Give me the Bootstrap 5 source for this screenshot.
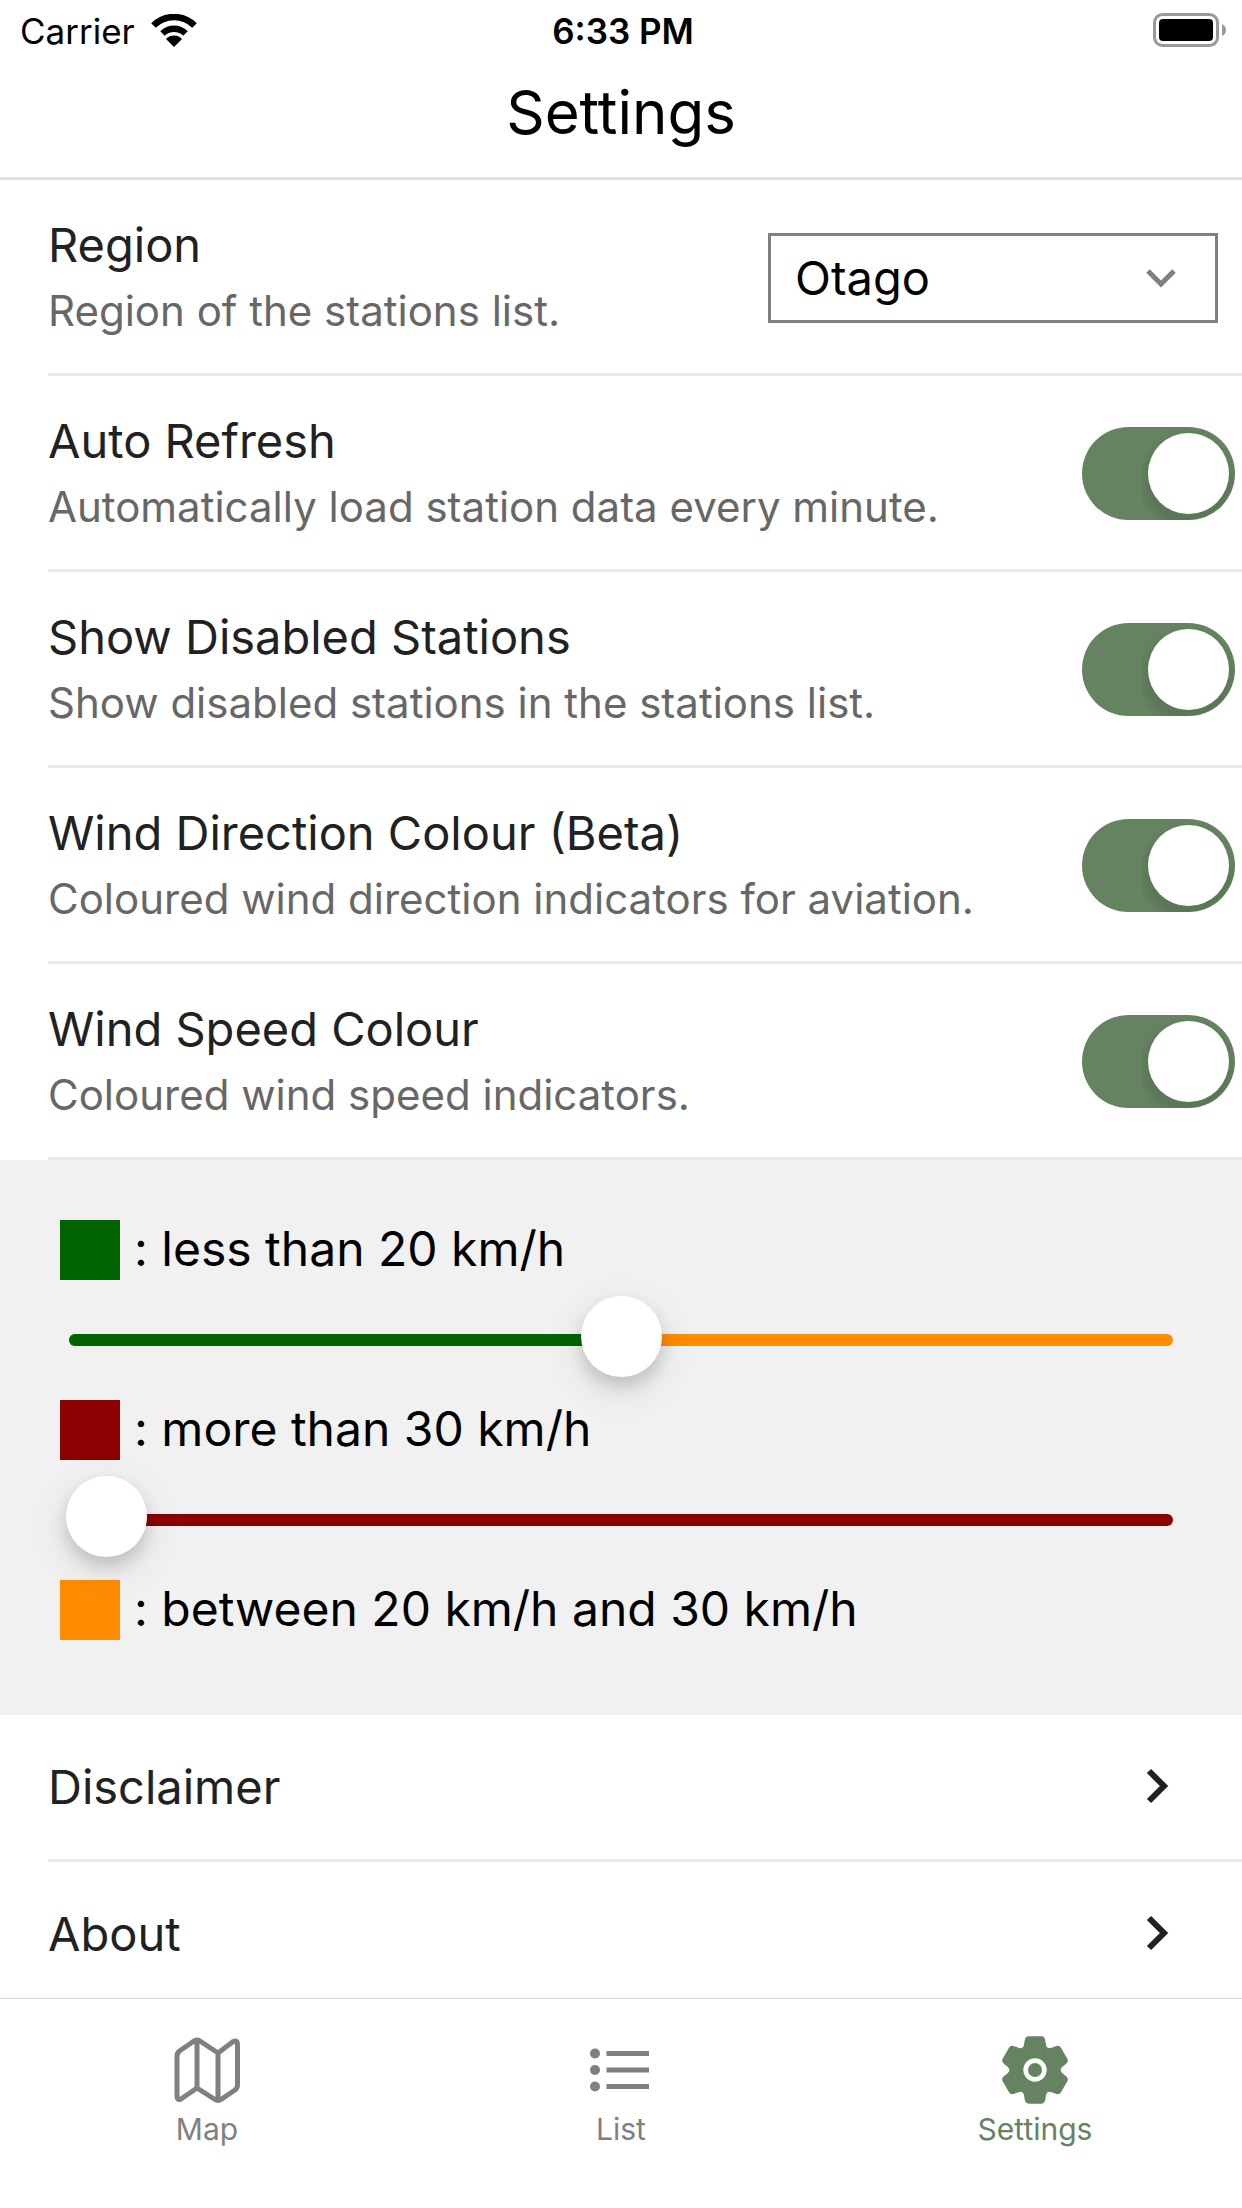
<!DOCTYPE html>
<html lang="en">
<head>
<meta charset="utf-8">
<meta name="viewport" content="width=device-width, initial-scale=1">
<title>Settings</title>
<link href="https://cdn.jsdelivr.net/npm/bootstrap@5.3.0/dist/css/bootstrap.min.css" rel="stylesheet">
<style>
  :root { --accent: #658361; --ink: #212121; --line: #eaeaea; --muted-icon: #808080; }
  body { font-family: Inter, "Liberation Sans", sans-serif; color: #000; background: #fff; }

  .status-bar { height: 60px; padding: 0 16px 0 20px; font-size: 35px; line-height: 57px; }
  .status-bar span { padding-top: 3px; }
  .app-header { border-bottom: 3px solid #e0e0e0; padding-bottom: 13px; }
  .app-header h1 { font-size: 60px; line-height: 104px; font-weight: 400; }

  .page-body { padding-bottom: 190px; }
  .setting { padding-left: 48px; }
  .setting-inner { border-bottom: 3px solid var(--line); padding: 34px 7px 32px 0; }
  .setting-title { font-size: 47px; line-height: 62px; color: var(--ink); }
  .setting-desc { font-size: 42px; line-height: 60px; margin-top: 5px; color: #676767; }

  .region-select {
    width: 450px; height: 90px; margin-right: 17px; padding: 0 84px 0 24px;
    border: 3px solid #808080; border-radius: 0; color: #000; font-size: 47px; line-height: 60px;
    background-image: url("data:image/svg+xml,%3csvg xmlns='http://www.w3.org/2000/svg' viewBox='0 0 32 20' fill='none' stroke='%23808080' stroke-width='5'%3e%3cpath d='M3 3l13 13L29 3'/%3e%3c/svg%3e");
    background-size: 32px 20px; background-position: right 38px center;
  }
  .form-switch .form-check-input.toggle {
    float: none; width: 153px; height: 93px; margin: 0; border: 0; border-radius: 47px;
    background-color: #ccc;
    background-image: url("data:image/svg+xml,%3csvg xmlns='http://www.w3.org/2000/svg' viewBox='0 0 93 93'%3e%3cdefs%3e%3cradialGradient id='g'%3e%3cstop offset='.75' stop-color='%23000' stop-opacity='.09'/%3e%3cstop offset='1' stop-color='%23000' stop-opacity='0'/%3e%3c/radialGradient%3e%3c/defs%3e%3ccircle cx='45' cy='54' r='52' fill='url(%23g)'/%3e%3ccircle cx='46.5' cy='46.5' r='40.5' fill='%23fff'/%3e%3c/svg%3e");
  }
  .form-switch .form-check-input.toggle:checked { background-color: var(--accent); }

  .speed-panel { background: #f1f1f1; padding: 60px 60px 75px; }
  .legend-line { height: 60px; font-size: 48px; line-height: 58px; gap: 14px; }
  .swatch { width: 60px; height: 60px; }
  .green { background-color: #006400; }
  .orange { background-color: #ff8c00; }
  .red { background-color: #8b0000; }
  .slider { display: grid; align-items: center; height: 120px; margin: 0 6px; }
  .slider > * { grid-area: 1 / 1; }
  .slider .progress { height: 12px; margin: 0 3px; border-radius: 6px; }
  .slider .form-range { z-index: 1; height: 81px; margin-bottom: 7px; }
  .form-range::-webkit-slider-runnable-track { height: 81px; background: transparent; }
  .form-range::-webkit-slider-thumb, .form-range::-webkit-slider-thumb:active {
    width: 81px; height: 81px; margin: 0; background: #fff; border-radius: 50%;
    box-shadow: 0 9px 15px rgba(0,0,0,.13), 0 12px 39px rgba(0,0,0,.12);
  }

  .link-row { height: 147px; padding-right: 71px; border-bottom: 3px solid var(--line); font-size: 47px; line-height: 60px; color: var(--ink); }
  .link-row svg { width: 28px; height: 40px; }

  .tab-bar { height: 210px; background: #fff; border-top: 1px solid #d8d8d8; padding-top: 35px; }
  .tab-link { gap: 4px; color: var(--muted-icon); font-size: 30px; line-height: 38px; }
  .tab-link.active { color: var(--accent); }
  .tab-link svg { width: 72px; height: 72px; }
</style>
<script src="https://cdn.jsdelivr.net/npm/bootstrap@5.3.0/dist/js/bootstrap.bundle.min.js"></script>
</head>
<body>
<div class="status-bar row g-0 align-items-center">
  <div class="col d-flex align-items-center">
    <span>Carrier</span>
    <svg class="ms-2 ps-1" width="58" height="33" viewBox="-4 0 54 33" aria-hidden="true">
      <path d="M23 33l-8-8a11 11 0 0 1 16 0z"/>
      <path d="M11.500 19.500a16.500 16.500 0 0 1 23 0" fill="none" stroke="#000" stroke-width="6.500"/>
      <path d="M2.500 11.500a29 29 0 0 1 41 0" fill="none" stroke="#000" stroke-width="6.500"/>
    </svg>
  </div>
  <span class="col-auto fw-semibold">6:33 PM</span>
  <div class="col d-flex justify-content-end">
    <svg width="73" height="34" viewBox="0 0 73 34" aria-hidden="true">
      <rect x="1.500" y="1.500" width="63" height="31" rx="8" fill="none" stroke="#999" stroke-width="3"/>
      <rect x="6" y="6" width="54" height="22" rx="4"/>
      <path d="M69 11q4 2 4 6t-4 6z" fill="#999"/>
    </svg>
  </div>
</div>
<header class="app-header text-center"><h1 class="m-0">Settings</h1></header>

<main class="page-body">
  <div class="setting">
    <div class="setting-inner d-flex align-items-center justify-content-between">
      <label for="region"><span class="setting-title d-block">Region</span><span class="setting-desc d-block">Region of the stations list.</span></label>
      <select class="form-select region-select" id="region"><option>Otago</option></select>
    </div>
  </div>
  <div class="setting">
    <div class="setting-inner form-switch d-flex align-items-center justify-content-between">
      <label for="refresh"><span class="setting-title d-block">Auto Refresh</span><span class="setting-desc d-block">Automatically load station data every minute.</span></label>
      <input class="form-check-input toggle flex-shrink-0" type="checkbox" role="switch" id="refresh" checked>
    </div>
  </div>
  <div class="setting">
    <div class="setting-inner form-switch d-flex align-items-center justify-content-between">
      <label for="disabled"><span class="setting-title d-block">Show Disabled Stations</span><span class="setting-desc d-block">Show disabled stations in the stations list.</span></label>
      <input class="form-check-input toggle flex-shrink-0" type="checkbox" role="switch" id="disabled" checked>
    </div>
  </div>
  <div class="setting">
    <div class="setting-inner form-switch d-flex align-items-center justify-content-between">
      <label for="direction"><span class="setting-title d-block">Wind Direction Colour (Beta)</span><span class="setting-desc d-block">Coloured wind direction indicators for aviation.</span></label>
      <input class="form-check-input toggle flex-shrink-0" type="checkbox" role="switch" id="direction" checked>
    </div>
  </div>
  <div class="setting">
    <div class="setting-inner form-switch d-flex align-items-center justify-content-between">
      <label for="speed"><span class="setting-title d-block">Wind Speed Colour</span><span class="setting-desc d-block">Coloured wind speed indicators.</span></label>
      <input class="form-check-input toggle flex-shrink-0" type="checkbox" role="switch" id="speed" checked>
    </div>
  </div>

  <section class="speed-panel">
    <div class="legend-line d-flex"><div class="swatch green"></div><label for="low">: less than 20 km/h</label></div>
    <div class="slider">
      <div class="progress orange"><div class="progress-bar green" style="width: 50%"></div></div>
      <input type="range" class="form-range" id="low" min="0" max="40" value="20">
    </div>
    <div class="legend-line d-flex"><div class="swatch red"></div><label for="high">: more than 30 km/h</label></div>
    <div class="slider">
      <div class="progress red"></div>
      <input type="range" class="form-range" id="high" min="30" max="80" value="30">
    </div>
    <div class="legend-line d-flex"><div class="swatch orange"></div><span>: between 20 km/h and 30 km/h</span></div>
  </section>

  <nav class="setting">
    <a href="#disclaimer" class="link-row d-flex align-items-center justify-content-between text-decoration-none">Disclaimer
      <svg viewBox="0 0 28 40" fill="none" stroke="currentColor" stroke-width="6" aria-hidden="true"><path d="M6 4l15 15L6 34"/></svg></a>
    <a href="#about" class="link-row d-flex align-items-center justify-content-between text-decoration-none">About
      <svg viewBox="0 0 28 40" fill="none" stroke="currentColor" stroke-width="6" aria-hidden="true"><path d="M6 4l15 15L6 34"/></svg></a>
  </nav>
</main>

<nav class="tab-bar fixed-bottom d-flex align-items-start">
  <a href="#map" class="tab-link d-flex flex-column align-items-center text-decoration-none flex-fill w-100">
    <svg viewBox="0 0 72 72" fill="none" stroke="currentColor" stroke-width="5" stroke-linejoin="round" aria-hidden="true">
      <path d="M6 22q0-3 2.500-5L23 7q3-2 6 0l18 12L61.500 8q5-3 5 3v40q0 3-2.500 5L50 65.500q-3 2-6 0L26 54 10 65q-4 2-4-3zM26 6v48M47 19v47"/></svg>
    <span>Map</span></a>
  <a href="#list" class="tab-link d-flex flex-column align-items-center text-decoration-none flex-fill w-100">
    <svg viewBox="0 0 72 72" fill="currentColor" aria-hidden="true">
      <circle cx="10" cy="19.500" r="5"/><circle cx="10" cy="36" r="5"/><circle cx="10" cy="52.500" r="5"/>
      <path d="M21.500 17H64v5H21.500zM21.500 33.500H64v5H21.500zM21.500 50H64v5H21.500z"/></svg>
    <span>List</span></a>
  <a href="#settings" class="tab-link active d-flex flex-column align-items-center text-decoration-none flex-fill w-100" aria-current="page">
    <svg viewBox="-108 -108 216 216" fill="currentColor" aria-hidden="true">
      <defs><path id="tooth" d="M0 0L-38.500-66.700Q-34-69-33-76L-31-88Q-29-101-19-101H19Q29-101 31-88L33-76Q34-69 38.500-66.700Z"/></defs>
      <circle r="74"/>
      <use href="#tooth"/><use href="#tooth" transform="rotate(60)"/><use href="#tooth" transform="rotate(120)"/>
      <use href="#tooth" transform="rotate(180)"/><use href="#tooth" transform="rotate(240)"/><use href="#tooth" transform="rotate(300)"/>
      <circle r="35" fill="#fff"/><circle r="21"/></svg>
    <span>Settings</span></a>
</nav>
</body>
</html>
